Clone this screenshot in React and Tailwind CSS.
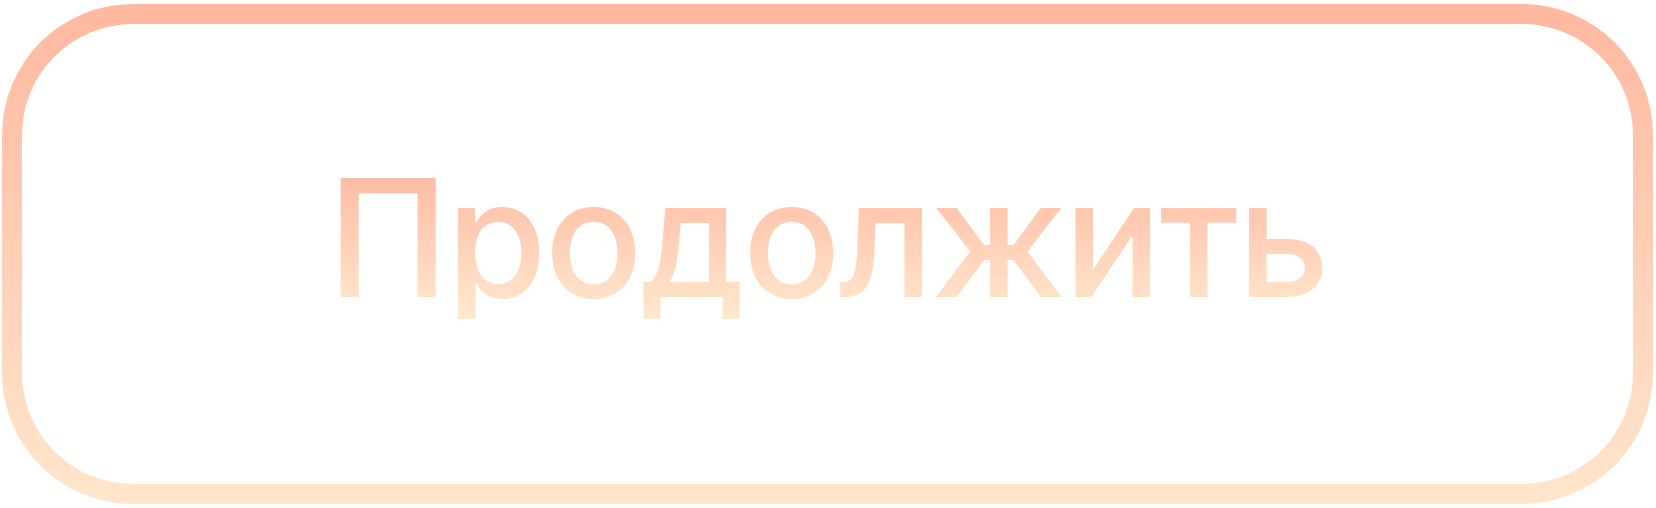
import React from "react";

function ContinueButton({ label }) {
  return (
    <button
      type="button"
      className="w-full h-full rounded-[131px] bg-gradient-to-b from-[#ffb8a0] to-[#fee6cc] p-[20px] cursor-pointer"
    >
      <div className="w-full h-full rounded-[111px] bg-white flex items-center justify-center pb-[33px]">
        <span className="bg-gradient-to-b from-[#ffb59e] to-[#ffe9cf] bg-clip-text text-transparent text-[163px] leading-[163px] font-medium tracking-[-2.5px] font-[family-name:Inter,'Noto_Sans',sans-serif]">
          {label}
        </span>
      </div>
    </button>
  );
}

export default function App() {
  return (
    <div className="w-[1656px] h-[508px] bg-white pt-[4px] pb-[4px] pl-[2px] pr-[3px]">
      <ContinueButton label="Продолжить" />
    </div>
  );
}
